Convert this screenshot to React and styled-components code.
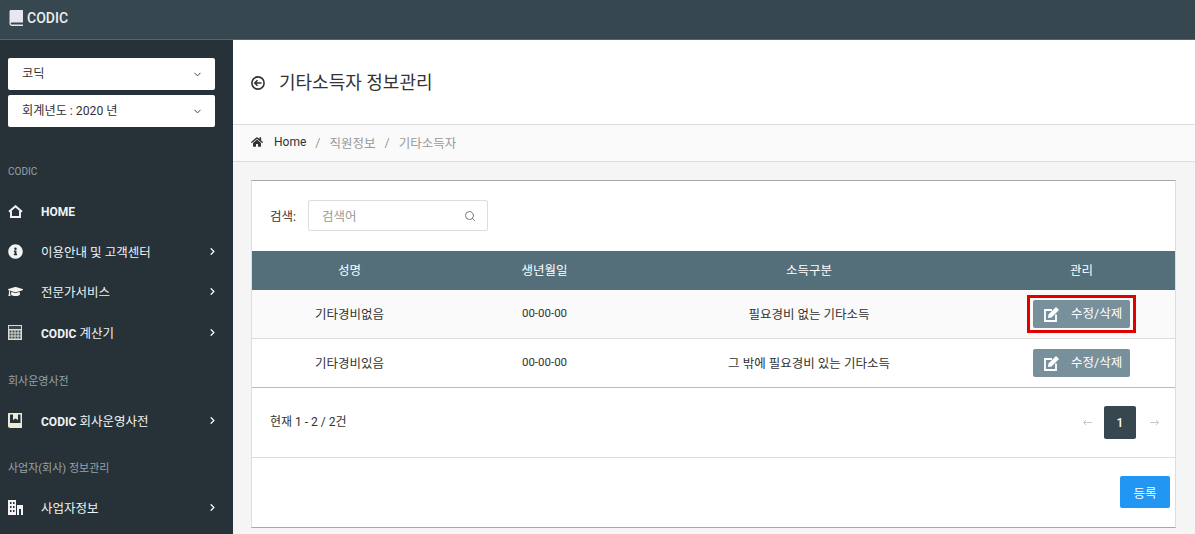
import React from 'react'
import styled, { createGlobalStyle } from 'styled-components'
import { FaInfoCircle, FaGraduationCap, FaHome } from 'react-icons/fa'
import { Search, ChevronDown, ChevronRight } from 'lucide-react'

const Global = createGlobalStyle`
  html, body { margin: 0; padding: 0; height: 100%; overflow: hidden; }
  body {
    font-family: Roboto, "Noto Sans CJK KR", sans-serif;
    font-size: 12.5px;
    color: #333;
    background: #f5f5f5;
  }
  * { box-sizing: border-box; }
`

const Page = styled.div`
  width: 1195px;
  height: 534px;
  display: flex;
  flex-direction: column;
  overflow: hidden;
`

const Navbar = styled.header`
  flex: 0 0 40px;
  display: flex;
  align-items: center;
  gap: 4px;
  padding: 0 9px 3px;
  background: #37474f;
  border-bottom: 1px solid #55666e;
  color: #eceff1;
  font-size: 14px;
  font-weight: 500;
`

const Body = styled.div`
  flex: 1;
  display: flex;
  min-height: 0;
`

const Sidebar = styled.aside`
  flex: 0 0 233px;
  background: #263238;
  padding: 18px 18px 0 8px;
  display: flex;
  flex-direction: column;
  overflow: hidden;
`

const SelectBox = styled.div`
  height: 32px;
  margin-bottom: 5px;
  padding: 0 12px 2px 14px;
  background: #fff;
  border-radius: 2px;
  display: flex;
  align-items: center;
  justify-content: space-between;
  color: #333;
  font-size: 12.2px;
  svg { margin-top: 3px; }
`

const SectionLabel = styled.div`
  height: ${p => p.$h}px;
  display: flex;
  align-items: center;
  color: #99a3a8;
  font-size: ${p => p.$size}px;
  margin-top: ${p => p.$top}px;
`

const MenuItem = styled.div`
  height: 40.3px;
  display: flex;
  align-items: center;
  color: #f1f3f4;
  font-size: 12.5px;
  margin-right: -3px;
`

const MenuIcon = styled.span`
  flex: 0 0 33px;
  display: flex;
  align-items: center;
  color: #f4f4f4;
`

const MenuText = styled.span`
  flex: 1;
`

const Brand = styled.b`
  font-size: 12px;
  font-weight: 700;
`

const Main = styled.main`
  flex: 1;
  min-width: 0;
  display: flex;
  flex-direction: column;
`

const PageHeader = styled.div`
  flex: 0 0 85px;
  background: #fff;
  border-bottom: 1px solid #ddd;
  display: flex;
  align-items: center;
  gap: 14px;
  padding: 0 18px 2px;
  color: #333;
  font-size: 18px;
  svg { margin-top: 4px; }
`

const Breadcrumb = styled.nav`
  flex: 0 0 37px;
  background: #fafafa;
  border-bottom: 1px solid #ddd;
  display: flex;
  align-items: center;
  padding: 0 18px 2px;
  color: #333;
`

const Crumb = styled.span`
  color: ${p => (p.$muted ? '#999' : '#333')};
  margin-left: ${p => p.$left || 0}px;
  font-size: ${p => (p.$muted ? 12.5 : 12)}px;
`

const Slash = styled.span`
  color: #999;
  margin: 0 9px;
`

const Content = styled.div`
  padding: 18px 19px 0 18px;
`

const Card = styled.section`
  background: #fff;
  border: 1px solid #ddd;
  border-top-color: #a9a9a9;
  border-bottom-color: #a9a9a9;
  height: 348px;
  display: flex;
  flex-direction: column;
`

const SearchRow = styled.div`
  flex: 0 0 70px;
  display: flex;
  align-items: center;
  padding: 0 18px 1px;
  gap: 12px;
  color: #333;
`

const SearchBox = styled.div`
  width: 180px;
  height: 31px;
  border: 1px solid #ddd;
  border-radius: 2px;
  display: flex;
  align-items: center;
  justify-content: space-between;
  padding: 0 11px 0 13px;
  color: #999;
`

const Row = styled.div`
  display: grid;
  grid-template-columns: 195px 195px 334px 1fr;
  align-items: center;
  height: ${p => p.$h}px;
  background: ${p => p.$bg};
  color: ${p => p.$color || '#333'};
  border-bottom: 1px solid ${p => p.$line};
`

const Cell = styled.div`
  display: flex;
  justify-content: center;
  padding-bottom: 2px;
  font-size: ${p => p.$size || 12.5}px;
  &:last-child { padding-left: 12px; }
`

const EditCell = styled(Cell)`
  padding-bottom: 0;
`

const EditButton = styled.button`
  position: relative;
  width: 97px;
  height: 28px;
  border: 0;
  border-radius: 2px;
  background: #78909c;
  color: #fff;
  font: inherit;
  white-space: nowrap;
  display: flex;
  align-items: center;
  gap: 12px;
  padding: 0 0 0 11px;
  span { padding-bottom: 3px; }
  &::after {
    content: "";
    display: ${p => (p.$marked ? 'block' : 'none')};
    position: absolute;
    inset: -5px -6px;
    border: 3px solid #e00000;
  }
`

const Pager = styled.div`
  flex: 0 0 70px;
  display: flex;
  align-items: center;
  justify-content: space-between;
  padding: 0 16px 0 18px;
  border-bottom: 1px solid #ddd;
`

const Count = styled.span`
  font-size: 12px;
  padding-bottom: 4px;
`

const PagerNav = styled.div`
  display: flex;
  align-items: center;
  gap: 12px;
`

const PageNum = styled.span`
  width: 32px;
  height: 33px;
  margin-right: 2px;
  border-radius: 2px;
  background: #37474f;
  color: #fff;
  font-size: 12px;
  font-weight: 500;
  display: flex;
  align-items: center;
  justify-content: center;
`

const Actions = styled.div`
  flex: 1;
  display: flex;
  justify-content: flex-end;
  padding: 18px 5px 0 0;
`

const Submit = styled.button`
  width: 50px;
  height: 32px;
  border: 0;
  border-radius: 2px;
  background: #2196f3;
  color: #fff;
  font: inherit;
`

const Book = () => (
  <svg width="14" height="16" viewBox="0 0 14 16">
    <path fill="#e8e6ef" d="M2 0h12v12H3c-1.400 0-2 .6-2.500 1.200V1.500C.5.600 1.100 0 2 0z" />
    <path fill="#e8e6ef" d="M.5 13.500C.5 12.300 1.500 11.500 3 11.500h11v1H3c-.7 0-1.200.4-1.200 1s.5 1 1.200 1h11V16H3c-1.500 0-2.500-1-2.500-2.500z" />
  </svg>
)

const HomeOutline = () => (
  <svg width="15" height="13" viewBox="0 0 15 13" fill="none" stroke="#f4f4f4" strokeWidth="1.900">
    <path d="M1 6.800 7.500 1.200 14 6.800" />
    <path d="M3 6v6h9V6" />
  </svg>
)

const Calculator = () => (
  <svg width="14" height="15" viewBox="0 0 14 15">
    <rect width="14" height="15" fill="#dcdcd6" />
    <rect x="1" y="1" width="12" height="3" fill="#3a464c" />
    {[5.5, 8.5, 11.5].map(y =>
      [1.5, 4.5, 7.5, 10.5].map(x => <rect key={`${x}-${y}`} x={x} y={y} width="2" height="2" fill="#3a464c" />)
    )}
  </svg>
)

const SaveBook = () => (
  <svg width="14" height="15" viewBox="0 0 14 15">
    <path fill="#eee9d6" d="M1 0h13v15H2c-1 0-2-1-2-2V1c0-.6.4-1 1-1z" />
    <path fill="#263238" d="M2 1.500h10.500V10H2z" />
    <path fill="#eee9d6" d="M5 1h5v6L7.500 5.400 5 7zM2 12h11v1H2z" />
  </svg>
)

const Company = () => (
  <svg width="15" height="15" viewBox="0 0 15 15">
    <path fill="#f4f4f4" d="M0 0h8v15H0zM9 5h6v10H9z" />
    <path fill="#263238" d="M2 2h1.500v2H2zM5 2h1.500v2H5zM2 6h1.500v2H2zM5 6h1.500v2H5zM2 10h1.500v2H2zM5 10h1.500v2H5zM11 9h2v6h-2z" />
  </svg>
)

const BackCircle = () => (
  <svg width="14" height="14" viewBox="0 0 14 14" fill="none" stroke="#333" strokeWidth="1.600">
    <circle cx="7" cy="7" r="6.100" />
    <path d="M10.500 7H4M6.500 4.200 3.800 7l2.700 2.800" />
  </svg>
)

const EditIcon = () => (
  <svg width="15" height="15" viewBox="0 0 15 15">
    <path fill="none" stroke="#fff" strokeWidth="1.800" d="M8 3H1v11h11V7.500" />
    <path fill="#fff" d="M12 0l3 3-7.500 7.500-3.500.5.500-3.500z" />
  </svg>
)

const Arrow = ({ flip }) => (
  <svg width="9" height="7" viewBox="0 0 9 7" fill="none" stroke="#c8c8c8" strokeWidth="1">
    <path d={flip ? 'M0 3.500h8.500M6 1l2.500 2.500L6 6' : 'M9 3.500H.5M3 1 .5 3.500 3 6'} />
  </svg>
)

const menuGroups = [
  {
    label: 'CODIC', size: 10, top: 20, h: 39,
    items: [
      { icon: <HomeOutline />, title: <Brand>HOME</Brand>, key: 'home', leaf: true },
      { icon: <FaInfoCircle size={15} />, title: '이용안내 및 고객센터', key: 'info' },
      { icon: <FaGraduationCap size={15} />, title: '전문가서비스', key: 'expert' },
      { icon: <Calculator />, title: <><Brand>CODIC</Brand> 계산기</>, key: 'calc' },
    ],
  },
  {
    label: '회사운영사전', size: 11, top: 7, h: 41,
    items: [{ icon: <SaveBook />, title: <><Brand>CODIC</Brand> 회사운영사전</>, key: 'dict' }],
  },
  {
    label: '사업자(회사) 정보관리', size: 11, top: 7, h: 40,
    items: [{ icon: <Company />, title: '사업자정보', key: 'biz' }],
  },
]

const rows = [
  { name: '기타경비없음', birth: '00-00-00', type: '필요경비 없는 기타소득', bg: '#fafafa', marked: true },
  { name: '기타경비있음', birth: '00-00-00', type: '그 밖에 필요경비 있는 기타소득', bg: '#fff' },
]

function App() {
  return (
    <Page>
      <Global />
      <Navbar><Book /> CODIC</Navbar>
      <Body>
        <Sidebar>
          <SelectBox>코딕 <ChevronDown size={11} /></SelectBox>
          <SelectBox>회계년도 : 2020 년 <ChevronDown size={11} /></SelectBox>
          {menuGroups.map(group => (
            <React.Fragment key={group.label}>
              <SectionLabel $size={group.size} $top={group.top} $h={group.h}>{group.label}</SectionLabel>
              {group.items.map(item => (
                <MenuItem key={item.key}>
                  <MenuIcon>{item.icon}</MenuIcon>
                  <MenuText>{item.title}</MenuText>
                  {!item.leaf && <ChevronRight size={11} strokeWidth={3} />}
                </MenuItem>
              ))}
            </React.Fragment>
          ))}
        </Sidebar>
        <Main>
          <PageHeader><BackCircle /> 기타소득자 정보관리</PageHeader>
          <Breadcrumb>
            <FaHome size={12} />
            <Crumb $left={11}>Home</Crumb>
            <Slash>/</Slash>
            <Crumb $muted>직원정보</Crumb>
            <Slash>/</Slash>
            <Crumb $muted>기타소득자</Crumb>
          </Breadcrumb>
          <Content>
            <Card>
              <SearchRow>
                검색:
                <SearchBox>검색어 <Search size={12} color="#777" /></SearchBox>
              </SearchRow>
              <Row $h={39} $bg="#546e7a" $color="#fff" $line="#546e7a">
                <Cell>성명</Cell>
                <Cell>생년월일</Cell>
                <Cell>소득구분</Cell>
                <Cell>관리</Cell>
              </Row>
              {rows.map((row, i) => (
                <Row key={row.name} $h={49} $bg={row.bg} $line={i === rows.length - 1 ? '#bbb' : '#ddd'}>
                  <Cell>{row.name}</Cell>
                  <Cell $size={11.5}>{row.birth}</Cell>
                  <Cell>{row.type}</Cell>
                  <EditCell>
                    <EditButton $marked={row.marked}><EditIcon /> <span>수정/삭제</span></EditButton>
                  </EditCell>
                </Row>
              ))}
              <Pager>
                <Count>현재 1 - 2 / 2건</Count>
                <PagerNav><Arrow /> <PageNum>1</PageNum> <Arrow flip /></PagerNav>
              </Pager>
              <Actions><Submit>등록</Submit></Actions>
            </Card>
          </Content>
        </Main>
      </Body>
    </Page>
  )
}

export default App
